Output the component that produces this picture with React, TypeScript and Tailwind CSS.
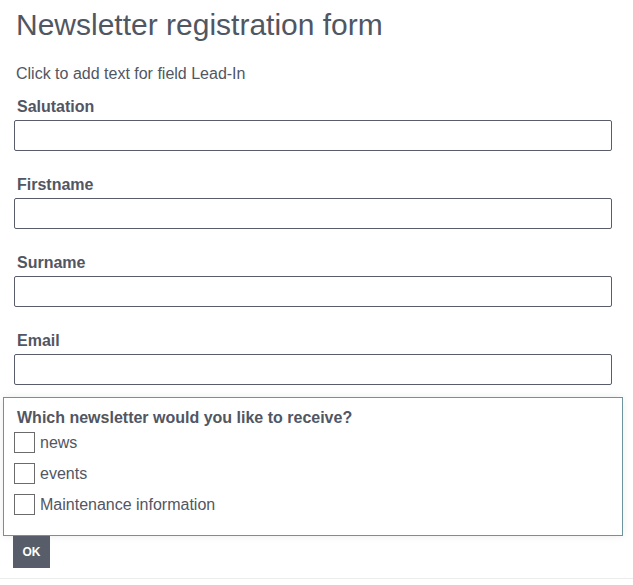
const fields = ["Salutation", "Firstname", "Surname", "Email"];
const options = ["news", "events", "Maintenance information"];

export default function App() {
  return (
    <div className="w-[633px] min-h-[585px] bg-white text-[#515663] font-['Liberation_Sans',Arial,sans-serif]">
      <div className="pl-[14px] pr-[21px]">
        <h1 className="pt-[7px] pl-[2px] text-[30px] leading-[36px] font-normal">
          Newsletter registration form
        </h1>
        <p className="mt-[19px] pl-[2px] text-[16px] leading-[24px]">
          Click to add text for field Lead-In
        </p>

        {/* Text fields */}
        <div className="mt-[9px] flex flex-col gap-[22px]">
          {fields.map((f) => (
            <div key={f} className="flex flex-col">
              <label className="pl-[3px] text-[16px] leading-[24px] font-bold">{f}</label>
              <input
                type="text"
                className="mt-[1px] h-[31px] w-[598px] rounded-[2px] border border-[#585d69] bg-white outline-none"
              />
            </div>
          ))}
        </div>
      </div>

      {/* Newsletter choice */}
      <div className="mt-[12px] ml-[3px] w-[620px] border border-[#6f939d] bg-white pt-[10px] pb-[20px] pl-[10px] shadow-[0_0_8px_rgba(0,0,0,0.08)]">
        <div className="pl-[3px] text-[16px] leading-[20px] font-bold">
          Which newsletter would you like to receive?
        </div>
        <div className="mt-[4px] flex flex-col gap-[10px]">
          {options.map((o) => (
            <label key={o} className="flex items-center gap-[5px] text-[16px] leading-[20px]">
              <span className="h-[21px] w-[21px] border border-[#6b6b6b] bg-white" />
              <span>{o}</span>
            </label>
          ))}
        </div>
      </div>

      <button className="ml-[13px] h-[32px] w-[37px] bg-[#585d6a] text-[12px] font-bold text-white">
        OK
      </button>
      <div className="mt-[10px] border-t border-[#ececec]" />
    </div>
  );
}
